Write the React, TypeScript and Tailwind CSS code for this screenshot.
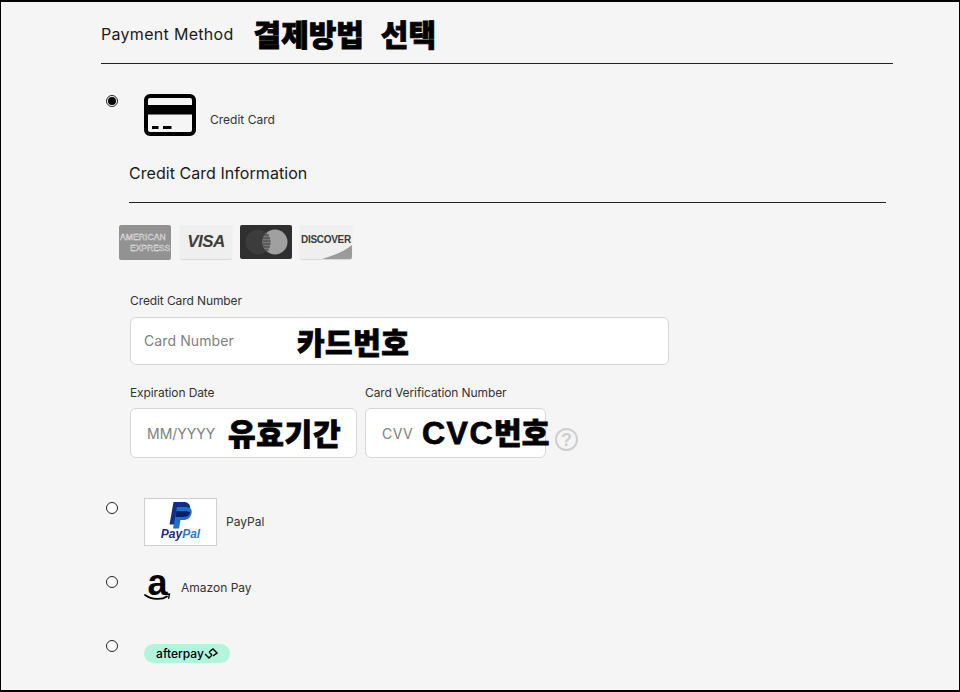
import React from "react";

const kr = "font-['Noto_Sans_CJK_KR',sans-serif] font-black text-black [-webkit-text-stroke:0.8px_black]";

function Radio({ checked = false }: { checked?: boolean }) {
  return (
    <div className="w-3 h-3 shrink-0 rounded-full border border-[#222] bg-white flex items-center justify-center">
      {checked && <div className="w-2 h-2 rounded-full bg-black" />}
    </div>
  );
}

function CardIcon() {
  return (
    <svg width="52" height="42" viewBox="0 0 52 42" className="shrink-0">
      <rect x="2" y="2" width="48" height="38" rx="4" fill="none" stroke="#000" strokeWidth="4" />
      <rect x="2" y="11" width="48" height="9.500" fill="#000" />
      <rect x="8" y="32" width="6.500" height="3" fill="#000" />
      <rect x="19" y="32" width="8.500" height="3" fill="#000" />
    </svg>
  );
}

function Amex() {
  return (
    <div className="w-[52px] h-[35px] rounded-[2px] bg-[#929292] flex flex-col justify-center overflow-hidden font-['Liberation_Sans',sans-serif] text-[8.5px] leading-[11px] text-transparent [-webkit-text-stroke:0.4px_#e6e6e6] whitespace-nowrap">
      <div className="pl-[1px] tracking-[0.1px]">AMERICAN</div>
      <div className="pl-[11px] tracking-[0px]">EXPRESS</div>
    </div>
  );
}

function Visa() {
  return (
    <div className="w-[52px] h-[34px] rounded-[2px] bg-[#efefef] shadow-[0_1px_1px_rgba(0,0,0,0.12)] flex items-center justify-center font-['Liberation_Sans',sans-serif] font-bold italic text-[17px] text-[#3d3d3d] tracking-[-0.5px]">
      VISA
    </div>
  );
}

function Master() {
  return (
    <div className="w-[52px] h-[34px] rounded-[2px] bg-[#2f2f2f]">
      <svg width="52" height="34" viewBox="0 0 52 34">
        <circle cx="18" cy="17" r="12.500" fill="#3c3c3c" />
        <circle cx="35" cy="17" r="12.500" fill="#a0a0a0" />
        <path d="M26.500 7.800a12.500 12.500 0 0 1 0 18.400a12.500 12.500 0 0 1 0-18.400z" fill="#777777" />
        <path d="M24 10h5M23 13h7M22.500 16h8M22.500 19h8M23 22h7M24 25h5" stroke="#444444" strokeWidth="1" />
      </svg>
    </div>
  );
}

function Discover() {
  return (
    <div className="relative w-[52px] h-[34px] rounded-[2px] bg-[#efefef] shadow-[0_1px_1px_rgba(0,0,0,0.12)] overflow-hidden">
      <svg width="52" height="34" viewBox="0 0 52 34" className="absolute inset-0">
        <path d="M22 34C36 30 46 25 52 20V34z" fill="#9b9b9b" />
      </svg>
      <div className="relative pt-[9px] text-center font-['Liberation_Sans',sans-serif] font-bold text-[10px] leading-[12px] tracking-[-0.3px] text-[#3a3a3a]">
        DISCOVER
      </div>
    </div>
  );
}

function PayPalBox() {
  return (
    <div className="w-[73px] h-[48px] shrink-0 bg-white border border-[#cfcfcf] flex flex-col items-center pt-[3px]">
      <svg width="23" height="27" viewBox="0 0 23 27">
        <path d="M4.500 0h9.500c5 0 8 2.500 7 7.500-1 5.500-4.500 7.500-9 7.500H8.500L7 22.500H0.500z" fill="#0f2f86" />
        <path d="M8 5h9c4 0 6.500 2 5.500 6.500-1 4.500-4 6.500-8 6.500h-3L10 26.500H4z" fill="#1f6fc4" />
        <path d="M7.500 9h9c1.500 0 3.500.5 4.500 1.500-1 3.500-3.500 4.500-9 4.500H6.500z" fill="#0b1f66" />
      </svg>
      <div className="font-['Liberation_Sans',sans-serif] font-bold italic text-[12px] leading-[13px] -mt-[1px]">
        <span className="text-[#16307e]">Pay</span>
        <span className="text-[#2a7cc9]">Pal</span>
      </div>
    </div>
  );
}

function AmazonLogo() {
  return (
    <div className="relative w-[27px] h-[28px] shrink-0">
      <div className="text-center font-['Liberation_Sans',sans-serif] font-bold text-[36px] leading-[18px] text-black">a</div>
      <svg width="27" height="9" viewBox="0 0 27 9" className="absolute left-0 bottom-0">
        <path d="M1 2c7 5 17 5 22 1.500" fill="none" stroke="#000" strokeWidth="1.800" strokeLinecap="round" />
        <path d="M21 1.500l4.500-.5-.8 4.200" fill="none" stroke="#000" strokeWidth="1.400" strokeLinecap="round" />
      </svg>
    </div>
  );
}

function HelpIcon() {
  return (
    <div className="w-[23px] h-[23px] shrink-0 rounded-full border-[2.5px] border-[#cfcfcf] flex items-center justify-center font-['Liberation_Sans',sans-serif] font-bold text-[18px] leading-none text-[#cfcfcf]">
      ?
    </div>
  );
}

export default function App() {
  return (
    <div className="w-[960px] h-[692px] box-border overflow-hidden bg-[#f5f5f5] border border-black border-t-2 border-b-2 pt-[1px] font-['Inter',sans-serif] text-[#222]">
      <div className="pl-[100px] pr-[66px]">
        {/* Heading */}
        <div className="h-[61px] border-b border-[#222] flex items-start pt-[12px]">
          <span className="text-[16px] leading-[38px] tracking-[0.3px] text-[#1a1a1a]">Payment Method</span>
          <span className={`ml-[20px] -mt-[1px] text-[30px] leading-[38px] [word-spacing:10px] whitespace-nowrap ${kr}`}>결제방법 선택</span>
        </div>

        {/* Credit card option */}
        <div className="flex items-start pl-[5px] pt-[30px]">
          <div className="mt-[1px]"><Radio checked /></div>
          <div className="ml-[26px]"><CardIcon /></div>
          <span className="ml-[14px] mt-[18px] text-[12px] leading-[16px] text-[#333]">Credit Card</span>
        </div>

        <div className="ml-[28px] mr-[7px] mt-[24px] h-[43px] border-b border-[#222] text-[16px] leading-[26px] tracking-[0.05px] text-[#1a1a1a]">
          Credit Card Information
        </div>

        {/* Card brands */}
        <div className="ml-[18px] mt-[22px] h-[35px] flex gap-[8px]">
          <Amex />
          <div className="ml-[1px]"><Visa /></div>
          <Master />
          <Discover />
        </div>

        {/* Number */}
        <div className="ml-[29px] mt-[33px] text-[12px] leading-[16px] tracking-[-0.1px] text-[#333]">Credit Card Number</div>
        <div className="ml-[29px] mt-[8px] w-[539px] h-[48px] box-border bg-white border border-[#d6d6d6] rounded-[6px] flex items-center pl-[13px]">
          <span className="w-[153px] -mt-[2px] text-[14px] tracking-[0.1px] text-[#808080]">Card Number</span>
          <span className={`text-[30px] leading-none tracking-[0.5px] whitespace-nowrap ${kr}`}>카드번호</span>
        </div>

        {/* Expiry + CVV */}
        <div className="ml-[29px] mt-[20px] flex gap-[8px] items-start">
          <div className="w-[227px]">
            <div className="text-[12px] leading-[16px] tracking-[-0.1px] text-[#333]">Expiration Date</div>
            <div className="mt-[7px] h-[50px] box-border bg-white border border-[#d6d6d6] rounded-[6px] flex items-center pl-[16px]">
              <span className="w-[81px] text-[14px] text-[#808080] whitespace-nowrap">MM/YYYY</span>
              <span className={`text-[30px] leading-none -mt-[2px] tracking-[0.7px] whitespace-nowrap ${kr}`}>유효기간</span>
            </div>
          </div>
          <div>
            <div className="text-[12px] leading-[16px] tracking-[-0.1px] text-[#333]">Card Verification Number</div>
            <div className="mt-[7px] flex items-start">
              <div className="w-[181px] h-[50px] box-border bg-white border border-[#d6d6d6] rounded-[6px] flex items-center pl-[16px]">
                <span className="w-[40px] shrink-0 text-[14px] tracking-[0.5px] text-[#808080]">CVV</span>
                <span className={`shrink-0 text-[30px] leading-none -mt-[2px] whitespace-nowrap ${kr}`}>
                  <span className="font-['Liberation_Sans',sans-serif] font-bold text-[32px] tracking-[1.500px]">CVC</span>번호
                </span>
              </div>
              <div className="ml-[9px] mt-[20px]"><HelpIcon /></div>
            </div>
          </div>
        </div>

        {/* PayPal */}
        <div className="flex items-start pl-[5px] mt-[40px]">
          <div className="mt-[4px]"><Radio /></div>
          <div className="ml-[26px]"><PayPalBox /></div>
          <span className="ml-[9px] mt-[16px] text-[12px] leading-[16px] text-[#333]">PayPal</span>
        </div>

        {/* Amazon */}
        <div className="flex items-start pl-[5px] mt-[28px]">
          <div className="mt-[2px]"><Radio /></div>
          <div className="ml-[26px]"><AmazonLogo /></div>
          <span className="ml-[10px] mt-[6px] text-[12px] leading-[16px] text-[#333]">Amazon Pay</span>
        </div>

        {/* Afterpay */}
        <div className="flex items-start pl-[5px] mt-[38px]">
          <Radio />
          <div className="ml-[26px] mt-[4px] w-[86px] h-[19px] rounded-full bg-[#b2f5dd] flex items-center justify-center font-['Inter',sans-serif] font-medium text-[12px] leading-none tracking-[0px] text-black">
            afterpay
            <svg width="14" height="11" viewBox="0 0 14 11">
              <path d="M1 6l4 4 3-3M5 4l4-3 4 4-4 3M5 4l3 3" fill="none" stroke="#000" strokeWidth="1.400" />
            </svg>
          </div>
        </div>
      </div>
    </div>
  );
}
